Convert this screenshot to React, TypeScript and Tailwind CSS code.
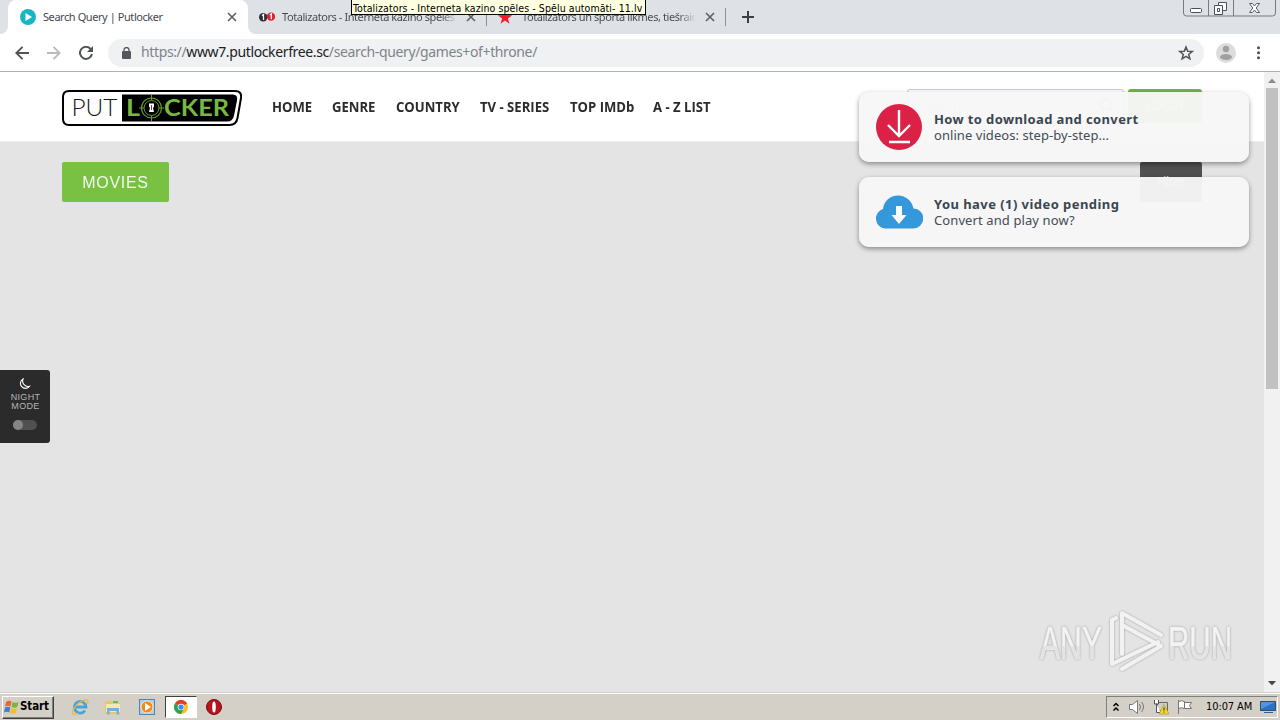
import * as React from "react"
import clsx from "clsx"

const navItems = [
  { label: "HOME", className: "w-10" },
  { label: "GENRE", className: "w-11" },
  { label: "COUNTRY", className: "w-16" },
  { label: "TV - SERIES", className: "w-[70px]" },
  { label: "TOP IMDb", className: "w-[63px]" },
  { label: "A - Z LIST", className: "w-[58px]" },
]

function CloseIcon() {
  return (
    <svg className="h-2.5 w-2.5 shrink-0" viewBox="0 0 10 10" stroke="#5f6368" strokeWidth="1.7">
      <path d="M1 1l8 8M9 1L1 9" />
    </svg>
  )
}

function TabStrip() {
  return (
    <div className="relative flex h-[34px] bg-[#dee1e6] text-[11px] tracking-[-0.43px] text-[#45494d]">
      <div className="flex h-full w-2 items-end bg-white">
        <div className="h-full w-2 rounded-br-lg bg-[#dee1e6]" />
      </div>
      <div className="flex h-full w-[240px] items-center rounded-t-lg bg-white pl-3 pr-[11px]">
        <svg className="h-4 w-4 shrink-0" viewBox="0 0 16 16">
          <circle cx="8" cy="8" r="8" fill="#17b5c5" />
          <path d="M5.5 4v8l6.5-4z" fill="#fff" />
        </svg>
        <span className="ml-[7px] flex-1 whitespace-nowrap">Search Query | Putlocker</span>
        <CloseIcon />
      </div>
      <div className="h-full w-2 bg-white">
        <div className="h-full w-2 rounded-bl-lg bg-[#dee1e6]" />
      </div>
      <div className="flex h-full w-[230px] items-center pl-[3px] pr-[10px]">
        <svg className="h-4 w-4 shrink-0" viewBox="0 0 16 16">
          <circle cx="4.2" cy="8.2" r="4.2" fill="#302d30" />
          <circle cx="12" cy="7.6" r="4.2" fill="#df2430" />
          <path d="M3 6.5l1.5-1V11M10.8 6l1.5-1v5.2" stroke="#fff" strokeWidth="1.3" fill="none" />
        </svg>
        <span className="ml-[7px] w-[176px] overflow-hidden whitespace-nowrap bg-linear-to-r from-[#45494d] from-90% to-transparent bg-clip-text text-transparent">
          Totalizators - Interneta kazino spēles
        </span>
        <span className="ml-auto"><CloseIcon /></span>
      </div>
      <div className="mt-2 h-[18px] w-px bg-[#8d9095]" />
      <div className="flex h-full w-[238px] items-center pl-[10px] pr-[10px]">
        <svg className="h-4 w-4 shrink-0" viewBox="0 0 16 16">
          <path d="M8 1l1.8 5.1 5.4.1-4.3 3.3 1.5 5.2L8 11.6l-4.4 3.1 1.5-5.2L.8 6.2l5.4-.1z" fill="#f5192f" />
        </svg>
        <span className="ml-[9px] w-[174px] overflow-hidden whitespace-nowrap bg-linear-to-r from-[#45494d] from-90% to-transparent bg-clip-text text-transparent">
          Totalizators un sporta likmes, tiešraides
        </span>
        <span className="ml-auto"><CloseIcon /></span>
      </div>
      <div className="mt-2 h-[18px] w-px bg-[#8d9095]" />
      <svg className="ml-[16px] mt-[11px] h-3 w-3" viewBox="0 0 12 12" stroke="#3c4043" strokeWidth="2">
        <path d="M6 0v12M0 6h12" />
      </svg>

      <div className="absolute left-[351px] top-0 h-4 w-[295px] -translate-y-px whitespace-nowrap border border-black bg-[#ffffe1] pl-px pt-px font-['DejaVu_Sans_Condensed','DejaVu_Sans',sans-serif] text-[10.5px] leading-[14px] tracking-[0.09px] text-black">
        Totalizators - Interneta kazino spēles - Spēļu automāti- 11.lv
      </div>

      <svg className="absolute right-0 top-0 h-[18px] w-[98px]" viewBox="0 0 98 18" fill="none">
        <path d="M1.5 0v13q0 3 3 3h86q3 0 3-3V0M26.5 0v16M51.5 0v16" stroke="#777b82" />
        <rect x="8.5" y="8.5" width="11" height="4" rx="1" stroke="#4b4f57" fill="#fff" />
        <path d="M36.500 2.500h8v8h-8z" stroke="#4b4f57" fill="#fff" />
        <path d="M32.500 5.500h8v9h-8z" stroke="#4b4f57" fill="#fff" />
        <path d="M35.500 8.500h2v3h-2z" stroke="#4b4f57" />
        <path d="M67.500 3.500h3l2 2.500 2-2.500h3l-3.300 4.500 3.300 4.500h-3l-2-2.500-2 2.500h-3l3.300-4.500z" stroke="#5b5f67" fill="#fff" />
      </svg>
    </div>
  )
}

function Toolbar() {
  return (
    <div className="flex h-[38px] items-center border-b border-[#aeb0b2] bg-white">
      <svg className="ml-[15px] h-[14px] w-[14px]" viewBox="0 0 14 14" fill="none" stroke="#505357" strokeWidth="1.9">
        <path d="M14 7H1.500M7.500 .8L1.300 7l6.200 6.200" />
      </svg>
      <svg className="ml-[18px] h-[14px] w-[14px]" viewBox="0 0 14 14" fill="none" stroke="#b9bbbd" strokeWidth="1.9">
        <path d="M0 7h12.500M6.500 .8L12.700 7l-6.200 6.200" />
      </svg>
      <svg className="ml-[18px] h-[14px] w-[14px]" viewBox="0 0 14 14" fill="none">
        <path d="M11.600 3A6 6 0 1 0 12.900 8" stroke="#505357" strokeWidth="2" />
        <path d="M14 0v6H8z" fill="#505357" />
      </svg>
      <div className="ml-[15px] flex h-[28px] w-[1096px] items-center rounded-full bg-[#eff1f3] pl-[14px] pr-[10px]">
        <svg className="h-3 w-[9px] shrink-0" viewBox="0 0 9 12">
          <rect y="4" width="9" height="8" rx="1" fill="#54575b" />
          <path d="M2 5V3a2.500 2.500 0 0 1 5 0v2" fill="none" stroke="#54575b" strokeWidth="1.300" />
        </svg>
        <div className="-mt-0.5 ml-[10px] flex-1 whitespace-nowrap text-[14px] tracking-[-0.37px] text-[#80848a]">
          https://<span className="text-[#202124]">www7.putlockerfree.sc</span>/search-query/games+of+throne/
        </div>
        <svg className="h-4 w-4" viewBox="0 0 16 16" fill="none" stroke="#505357" strokeWidth="1.500">
          <path d="M8 2l1.700 4.200 4.500.3-3.500 2.900 1.200 4.400L8 11.400l-3.900 2.400 1.200-4.400-3.500-2.900 4.500-.3z" />
        </svg>
      </div>
      <svg className="ml-3 h-5 w-5" viewBox="0 0 20 20">
        <circle cx="10" cy="10" r="10" fill="#dcdcdc" />
        <circle cx="10" cy="6" r="3.200" fill="#a0a0a0" />
        <ellipse cx="10" cy="14" rx="6" ry="3" fill="#a0a0a0" />
      </svg>
      <svg className="ml-4 h-4 w-4" viewBox="0 0 16 16" fill="#4b4e52">
        <circle cx="6.500" cy="2.700" r="1.500" />
        <circle cx="6.500" cy="7.700" r="1.500" />
        <circle cx="6.500" cy="12.700" r="1.500" />
      </svg>
    </div>
  )
}

function Logo() {
  return (
    <svg className="h-9 w-[180px] shrink-0" viewBox="0 0 180 36">
      <path d="M7 1h166q7 0 6 7l-3.500 20q-1.200 7-8 7H7q-6 0-6-6V7q0-6 6-6z" fill="#fff" stroke="#000" strokeWidth="2" />
      <path d="M60 4.500h111q5 0 4 6l-3 15q-1 6-7 6H60z" fill="#000" />
      <g fontFamily="'Lato Light', Lato, sans-serif" fontWeight="300">
        <text x="9.500" y="26" fontSize="23" textLength="46" lengthAdjust="spacingAndGlyphs" fill="#181818">PUT</text>
      </g>
      <g fill="#78b83e" fontFamily="Lato, sans-serif" fontWeight="700" fontSize="23">
        <text x="64" y="26" textLength="14" lengthAdjust="spacingAndGlyphs">L</text>
        <text x="102" y="26" textLength="65" lengthAdjust="spacingAndGlyphs">CKER</text>
      </g>
      <g fill="none" stroke="#639a2c">
        <circle cx="89.500" cy="18" r="10" strokeWidth="1.200" />
        <circle cx="89.500" cy="18" r="7.500" strokeWidth="1" />
        <path d="M89.500 5v5M89.500 26v5M77 18h5M97 18h5" />
      </g>
      <path d="M87 13.500h5v3l-1 1.500 1 4h-5l1-4-1-1.500z" fill="#fff" />
      <path d="M89.500 15v5" stroke="#555" />
    </svg>
  )
}

function SiteHeader() {
  return (
    <header className="flex h-[70px] items-start border-b border-[#eee] bg-white pl-[62px] pt-[17px]">
      <div className="pt-px"><Logo /></div>
      <nav className="ml-[30px] mt-[8px] flex gap-5 font-['Open_Sans',sans-serif] text-[13.5px] font-bold leading-5 text-[#2b2b2b]">
        {navItems.map((item) => (
          <a key={item.label} className={clsx("whitespace-nowrap", item.className)}>
            <span className="inline-block origin-left scale-x-[.97]">{item.label}</span>
          </a>
        ))}
      </nav>
      <div className="ml-auto mr-1 flex h-[34px] w-[217px] items-center justify-between rounded-[3px] border border-[#c6c8d4] bg-white pl-3 pr-2 text-[13px] text-[#bbb]">
        Search...
        <svg className="h-4 w-4" viewBox="0 0 16 16" fill="none" stroke="#999" strokeWidth="2">
          <circle cx="6.500" cy="6.500" r="5" />
          <path d="M10.500 10.500L15 15" />
        </svg>
      </div>
      <button className="mr-[62px] h-[34px] w-[74px] rounded-[3px] bg-[#79b240] text-xs text-white">LOGIN</button>
    </header>
  )
}

type NoticeProps = { title: string; text: string; titleClass: string; textClass: string; children: React.ReactNode }

function Notice({ title, text, titleClass, textClass, children }: NoticeProps) {
  return (
    <div className="flex h-[70px] w-[390px] items-center rounded-[10px] bg-[#f7f7f7]/96 pl-4 shadow-[0_2px_5px_rgba(0,0,0,0.4)]">
      {children}
      <div className="ml-[11px] whitespace-nowrap font-['Noto_Sans','Open_Sans',sans-serif] text-[13px] leading-4 text-[#444c55]">
        <div className={clsx("font-bold text-[#3b4650]", titleClass)}>{title}</div>
        <div className={textClass}>{text}</div>
      </div>
    </div>
  )
}

function Notices() {
  return (
    <div className="absolute left-[859px] top-5 flex flex-col gap-[15px]">
      <Notice title="How to download and convert" text="online videos: step-by-step..." titleClass="tracking-[0.38px]" textClass="tracking-[0.06px]">
        <svg className="h-12 w-12" viewBox="0 0 48 48" fill="none" stroke="#fff" strokeWidth="2.400">
          <circle cx="24" cy="24" r="23" fill="#dc2147" stroke="none" />
          <path d="M24 7v25M13 22l11 11 11-11M14 39h21" />
        </svg>
      </Notice>
      <Notice title="You have (1) video pending" text="Convert and play now?" titleClass="tracking-[0.44px]" textClass="tracking-[0.1px]">
        <svg className="h-12 w-12" viewBox="0 0 48 48">
          <path d="M10 40.500A10 10 0 0 1 8 21C9 13 15 7.500 23 7.500S37 13 38.500 20.500A10 10 0 0 1 38 40.500z" fill="#3498db" />
          <path d="M21 18h6v9h4.500L24 36l-7.500-9H21z" fill="#fff" />
        </svg>
      </Notice>
    </div>
  )
}

function NightMode() {
  return (
    <div className="absolute left-0 top-[298px] flex h-[73px] w-[50px] flex-col items-center rounded-r-[3px] bg-[#2b2b2b] pt-2">
      <svg className="h-3 w-3" viewBox="0 0 12 12" fill="none" stroke="#fff" strokeWidth="1.100">
        <path d="M4 1A5 5 0 1 0 10.500 8.300 5.500 5.500 0 0 1 4 1z" />
      </svg>
      <div className="mt-[3px] pl-px text-center font-['Liberation_Sans',sans-serif] text-[9px] leading-[9px] tracking-[0.35px] text-[#b5b5b5]">
        NIGHT<br />MODE
      </div>
      <div className="mt-[9px] h-[10px] w-6 rounded-full bg-[#505050]">
        <div className="h-[10px] w-[10px] rounded-full bg-[#858585]" />
      </div>
    </div>
  )
}

function Watermark() {
  return (
    <div className="absolute left-[1038px] top-[536px] flex h-[66px] items-center drop-shadow-[0_0_1px_rgba(0,0,0,0.3)]">
      <svg className="h-[66px] w-[200px]" viewBox="0 0 200 66" fontFamily="'Liberation Sans', sans-serif" fontSize="46">
        <defs>
          <linearGradient id="wm" x1="0" y1="0" x2="0" y2="1">
            <stop offset=".55" stopColor="#f4f4f4" />
            <stop offset=".56" stopColor="#e3e3e3" />
          </linearGradient>
        </defs>
        <g fill="url(#wm)" stroke="#ededed" strokeWidth=".7">
          <text x="2" y="51" textLength="62" lengthAdjust="spacingAndGlyphs">ANY</text>
          <text x="130" y="51" textLength="64" lengthAdjust="spacingAndGlyphs">RUN</text>
        </g>
        <g fill="none" stroke="#f2f2f2" strokeWidth="4" strokeLinejoin="round" strokeLinecap="round">
          <path d="M84 46V5l39 22M84 17l39 21-39 23" />
          <path d="M78 10l-4 2v44l46-22" />
        </g>
      </svg>
    </div>
  )
}

function ScrollBar() {
  return (
    <div className="flex h-full w-4 shrink-0 flex-col items-center bg-[#f1f1f1]">
      <svg className="h-4 w-4 shrink-0" viewBox="0 0 16 16"><path d="M4 11l4-4.500 4 4.500z" fill="#8b8b8b" /></svg>
      <div className="h-[301px] w-[12px] bg-[#c1c1c1]" />
      <svg className="mt-auto h-4 w-4 shrink-0" viewBox="0 0 16 16"><path d="M4 5l4 4.500L12 5z" fill="#484848" /></svg>
    </div>
  )
}

function QuickLaunch() {
  return (
    <>
      <svg className="ml-[17px] h-[18px] w-[18px]" viewBox="0 0 18 18" fill="none">
        <path d="M14 12.500A5.800 5.800 0 1 1 15 9H4" stroke="#45a5df" strokeWidth="2.800" />
        <path d="M2 16C-1 12 10 1 16 2q2 1 0 4M2 16q2 1 5-1" stroke="#e9b938" strokeWidth="1.300" />
      </svg>
      <svg className="ml-[16px] h-4 w-4" viewBox="0 0 16 16">
        <path d="M0 2h6l1 2h8v11H0z" fill="#e4c86e" />
        <path d="M1 5h14v8H1z" fill="#f8e9a9" />
        <path d="M2 15.500V9h12v6.500h-2.500V12h-7v3.500z" fill="#6db4dc" />
        <path d="M8 2h5v2H8z" fill="#70b84e" />
      </svg>
      <svg className="ml-[18px] h-4 w-4" viewBox="0 0 16 16">
        <rect x=".5" y=".5" width="15" height="15" fill="#aecfe9" stroke="#5583b0" />
        <circle cx="8" cy="8" r="6" fill="#f28b17" stroke="#fff" strokeWidth=".7" />
        <path d="M6 4v8l6-4z" fill="#fff" />
      </svg>
      <div className="ml-[10px] flex h-[22px] w-8 items-center justify-center border border-r-white border-b-white border-l-[#404040] border-t-[#404040] bg-white">
        <svg className="h-[14px] w-[14px]" viewBox="0 0 16 16">
          <circle cx="8" cy="8" r="8" fill="#fbc116" />
          <path d="M8 8L1.070 4A8 8 0 0 1 14.930 4z" fill="#e33b2e" />
          <path d="M8 8L1.070 4A8 8 0 0 0 8 16l3.500-6z" fill="#31a350" />
          <circle cx="8" cy="8" r="3.800" fill="#fff" />
          <circle cx="8" cy="8" r="3" fill="#4285f4" />
        </svg>
      </div>
      <svg className="ml-[9px] h-4 w-4" viewBox="0 0 16 16">
        <circle cx="8" cy="8" r="7.500" fill="#b81419" stroke="#6f1013" />
        <ellipse cx="8" cy="8" rx="1.800" ry="5.500" fill="#fff" />
      </svg>
    </>
  )
}

function Taskbar() {
  return (
    <div className="flex h-7 items-center border-t border-[#d4d0c8] bg-[#d4d0c8] font-['DejaVu_Sans_Condensed','DejaVu_Sans',sans-serif] text-black shadow-[inset_0_1px_0_#fff]">
      <div className="mt-px ml-[2px] flex h-[23px] w-[52px] items-center border border-r-[#404040] border-b-[#404040] border-l-white border-t-white pl-px shadow-[inset_-1px_-1px_0_#808080]">
        <svg className="h-4 w-4 shrink-0" viewBox="0 0 16 16">
          <path d="M2 3q3-2 5.500-.5L6.500 7.500Q4 6 1 7.500z" fill="#e8672c" />
          <path d="M8.500 3q3 1.500 6 0l-1.200 5Q10.500 9.500 7.500 8z" fill="#79b73b" />
          <path d="M1 8.500q3-1.500 5.300 0L5.200 13.500Q3 12 0 13.500z" fill="#3a80cf" />
          <path d="M7.200 9q3 1.500 5.800 0l-1.200 5q-3 1.500-5.600 0z" fill="#f5bd27" />
        </svg>
        <span className="whitespace-nowrap text-[11.5px] font-bold tracking-[-0.1px]">Start</span>
      </div>
      <QuickLaunch />
      <div className="ml-auto mr-[2px] mt-px flex h-[22px] w-[172px] items-center border border-r-white border-b-white border-l-[#808080] border-t-[#808080] pl-[5px]">
        <svg className="h-[10px] w-2" viewBox="0 0 8 10" fill="none" stroke="#000" strokeWidth="1.500"><path d="M1.500 4L4 1.500 6.500 4M1.500 8.500L4 6l2.500 2.500" /></svg>
        <svg className="ml-[9px] h-4 w-4" viewBox="0 0 16 16" fill="none" stroke="#777">
          <path d="M.5 5.500h3l5-4v13l-5-4h-3z" fill="#fff" />
          <path d="M10.500 5q2 3 0 6M12.500 3q4 5 0 10" />
        </svg>
        <svg className="ml-2 h-4 w-4" viewBox="0 0 16 16">
          <path d="M4.500 3.500h10v8h-10z" fill="#ccc" stroke="#666" />
          <path d="M1.500 1v4h4V1M3.500 4.500v9h4" fill="#fff" stroke="#555" />
          <path d="M11 5.500L16 15H6z" fill="#f5d731" stroke="#ae8d16" strokeWidth=".6" />
          <path d="M11 8.500v3M11 12.500v1" stroke="#222" />
        </svg>
        <svg className="ml-2 h-4 w-4" viewBox="0 0 16 16" fill="#fff" stroke="#777">
          <path d="M1.500 1v14M1.500 2.500q3-1.500 6 0v7q-3-1.500-6 0zM7.500 3.500h7l-2 3 2 3h-7" />
        </svg>
        <span className="ml-[13px] whitespace-nowrap text-[11px] tracking-[-0.1px]">10:07 AM</span>
        <svg className="ml-auto mr-px h-[14px] w-4" viewBox="0 0 16 14">
          <path d="M.5 1.500h15v9H.5z" fill="#2872c9" stroke="#3a4a60" />
          <path d="M1 2h14L1 9z" fill="#5095dd" />
          <path d="M4 12.500h9" stroke="#30609b" />
        </svg>
      </div>
    </div>
  )
}

export default function App() {
  return (
    <div className="flex h-[720px] w-[1280px] flex-col overflow-hidden font-['Noto_Sans','Open_Sans',sans-serif]">
      <TabStrip />
      <Toolbar />
      <div className="relative flex h-[620px] bg-[#e4e4e4]">
        <main className="min-w-0 flex-1">
          <SiteHeader />
          <div className="flex justify-between pl-[62px] pr-[62px] pt-5">
            <div className="flex h-10 w-[107px] items-center justify-center rounded-[2px] bg-[#78c143] font-['Liberation_Sans',sans-serif] text-base tracking-[0.7px] text-white">
              <span className="pt-0.5 opacity-90">MOVIES</span>
            </div>
            <div className="flex h-10 w-[62px] items-center justify-center rounded-[2px] bg-[#505050] text-xs text-[#ddd]">Filter</div>
          </div>
        </main>
        <ScrollBar />
        <Notices />
        <NightMode />
        <Watermark />
      </div>
      <Taskbar />
    </div>
  )
}
